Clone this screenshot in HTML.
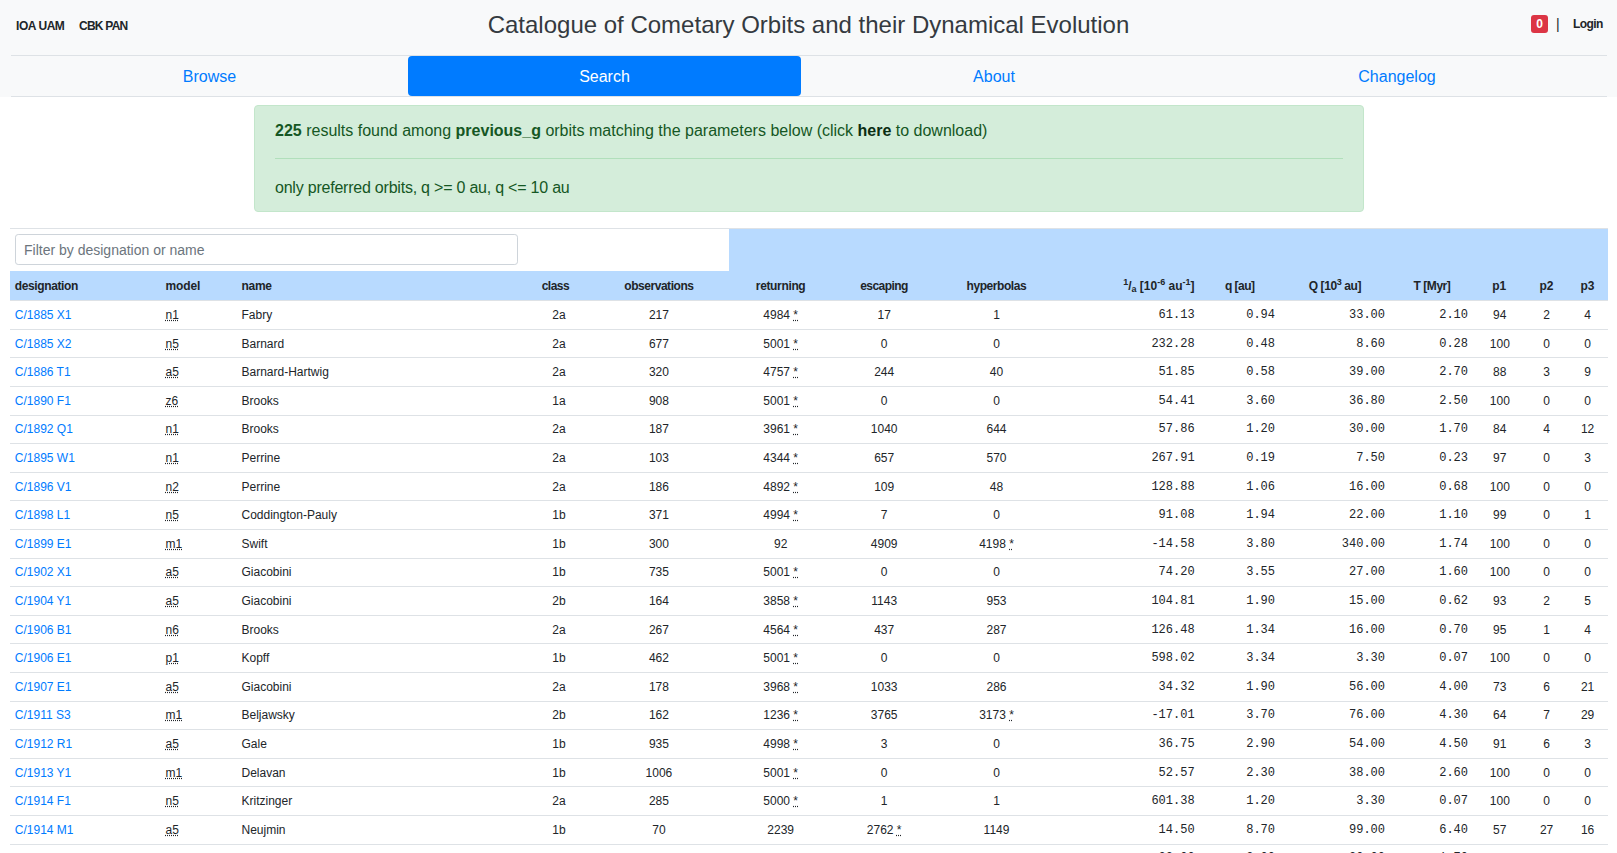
<!DOCTYPE html>
<html><head><meta charset="utf-8"><title>Catalogue of Cometary Orbits and their Dynamical Evolution</title>
<style>
html,body{margin:0;padding:0;}
body{width:1617px;height:853px;overflow:hidden;position:relative;background:#fff;font-family:"Liberation Sans",sans-serif;color:#212529;}
.abs{position:absolute;white-space:nowrap;}
#topbar{position:absolute;left:0;top:0;width:1617px;height:97px;background:#f8f9fa;}
.brand{position:absolute;font-weight:bold;font-size:12px;line-height:18px;color:#212529;white-space:nowrap;}
#title{position:absolute;left:0;width:1617px;text-align:center;font-size:24px;line-height:29px;top:10px;color:#343a40;white-space:nowrap;}
#badge{position:absolute;left:1531px;top:15px;width:17px;height:18px;background:#dc3545;border-radius:3px;color:#fff;font-weight:bold;font-size:12px;line-height:18px;text-align:center;}
.navline{position:absolute;left:11px;width:1596px;height:1px;background:#dee2e6;}
.nav{position:absolute;top:56px;height:40px;line-height:42px;text-align:center;font-size:16px;color:#007bff;white-space:nowrap;}
#search{background:#007bff;color:#fff;border-radius:4px;}
#alert{position:absolute;left:254px;top:105px;width:1108px;height:105px;background:#d4edda;border:1px solid #c3e6cb;border-radius:4px;color:#155724;font-size:16px;}
#alert .t{position:absolute;left:20px;white-space:nowrap;line-height:24px;}
#alert .hr{position:absolute;left:20px;right:20px;top:52px;height:1px;background:#b1dfbb;}
#tbl{position:absolute;left:10px;top:228px;width:1598px;}
.row{position:absolute;left:10px;width:1598px;height:28.6px;border-top:1px solid #dee2e6;box-sizing:border-box;}
.row span,.hrow span{position:absolute;top:4.8px;line-height:18px;font-size:12px;white-space:nowrap;}
span.c{text-align:center;}
span.r{text-align:right;}
span.m{font-family:"Liberation Mono",monospace;}
a{color:#007bff;text-decoration:none;}
abbr{text-decoration:underline dotted;}
.hrow span{font-weight:bold;}
sup,sub{font-size:75%;line-height:0;position:relative;vertical-align:baseline;}
sup{top:-.5em;} sub{bottom:-.25em;}
#filter{position:absolute;left:15px;top:234px;width:501px;height:29px;border:1px solid #ced4da;border-radius:3.2px;background:#fff;}
#filter span{position:absolute;left:8px;top:1px;line-height:29px;font-size:14px;color:#6c757d;white-space:nowrap;}
</style></head><body>
<div id="topbar"></div>
<div class="brand" style="left:16px;top:17px;letter-spacing:-0.45px">IOA UAM</div>
<div class="brand" style="left:79px;top:17px;letter-spacing:-0.75px">CBK PAN</div>
<div id="title">Catalogue of Cometary Orbits and their Dynamical Evolution</div>
<div id="badge">0</div>
<div class="brand" style="left:1556px;top:15px;font-weight:normal;font-size:14px">|</div>
<div class="brand" style="left:1573px;top:15px;letter-spacing:-0.55px">Login</div>
<div class="navline" style="top:55px"></div>
<div class="navline" style="top:96px"></div>
<div class="nav" style="left:11px;width:397px">Browse</div>
<div class="nav" id="search" style="left:408px;width:393px">Search</div>
<div class="nav" style="left:801px;width:386px">About</div>
<div class="nav" style="left:1187px;width:420px">Changelog</div>
<div id="alert">
<div class="t" style="top:13px"><b>225</b> results found among <b>previous_g</b> orbits matching the parameters below (click <b style="color:#0b2e13">here</b> to download)</div>
<div class="hr"></div>
<div class="t" style="top:70px;letter-spacing:-0.22px">only preferred orbits, q &gt;= 0 au, q &lt;= 10 au</div>
</div>
<div style="position:absolute;left:10px;top:228px;width:1598px;height:1px;background:#dee2e6"></div>
<div style="position:absolute;left:729px;top:229px;width:879px;height:42px;background:#b8daff"></div>
<div style="position:absolute;left:10px;top:271px;width:1598px;height:29px;background:#b8daff"></div>
<div id="filter"><span>Filter by designation or name</span></div>
<div class="hrow" style="position:absolute;left:10px;top:272px;width:1598px;height:29px"><span class="l" style="letter-spacing:-0.39px;left:4.8px">designation</span><span class="l" style="letter-spacing:-0.1px;left:155.5px">model</span><span class="l" style="letter-spacing:-0.3px;left:231.5px">name</span><span class="c" style="letter-spacing:-0.5px;left:395.4px;width:300px">class</span><span class="c" style="letter-spacing:-0.46px;left:498.9px;width:300px">observations</span><span class="c" style="letter-spacing:-0.35px;left:620.6px;width:300px">returning</span><span class="c" style="letter-spacing:-0.54px;left:724.0px;width:300px">escaping</span><span class="c" style="letter-spacing:-0.44px;left:836.4px;width:300px">hyperbolas</span><span class="r" style="left:884.6px;width:300px"><sup>1</sup>/<sub>a</sub> [10<sup>-6</sup> au<sup>-1</sup>]</span><span class="r" style="letter-spacing:-0.5px;left:944.6px;width:300px">q [au]</span><span class="r" style="letter-spacing:-0.4px;left:1051.1px;width:300px">Q [10<sup>3</sup> au]</span><span class="r" style="letter-spacing:-0.45px;left:1140.4px;width:300px">T [Myr]</span><span class="c" style="left:1339.3px;width:300px">p1</span><span class="c" style="left:1386.5px;width:300px">p2</span><span class="c" style="left:1427.5px;width:300px">p3</span></div>
<div id="body" style="position:absolute;left:0;top:0;width:1617px">
<div class="row" style="top:300.20px"><span class="l" style="left:4.8px"><a>C/1885 X1</a></span><span class="l" style="left:155.5px"><abbr>n1</abbr></span><span class="l" style="left:231.5px">Fabry</span><span class="c" style="left:399.0px;width:300px">2a</span><span class="c" style="left:498.9px;width:300px">217</span><span class="c" style="left:620.7px;width:300px">4984 <abbr>*</abbr></span><span class="c" style="left:724.2px;width:300px">17</span><span class="c" style="left:836.5px;width:300px">1</span><span class="r m" style="left:884.6px;width:300px">61.13</span><span class="r m" style="left:965.0px;width:300px">0.94</span><span class="r m" style="left:1075.0px;width:300px">33.00</span><span class="r m" style="left:1158.0px;width:300px">2.10</span><span class="c" style="left:1339.8px;width:300px">94</span><span class="c" style="left:1386.6px;width:300px">2</span><span class="c" style="left:1427.6px;width:300px">4</span></div><div class="row" style="top:328.80px"><span class="l" style="left:4.8px"><a>C/1885 X2</a></span><span class="l" style="left:155.5px"><abbr>n5</abbr></span><span class="l" style="left:231.5px">Barnard</span><span class="c" style="left:399.0px;width:300px">2a</span><span class="c" style="left:498.9px;width:300px">677</span><span class="c" style="left:620.7px;width:300px">5001 <abbr>*</abbr></span><span class="c" style="left:724.2px;width:300px">0</span><span class="c" style="left:836.5px;width:300px">0</span><span class="r m" style="left:884.6px;width:300px">232.28</span><span class="r m" style="left:965.0px;width:300px">0.48</span><span class="r m" style="left:1075.0px;width:300px">8.60</span><span class="r m" style="left:1158.0px;width:300px">0.28</span><span class="c" style="left:1339.8px;width:300px">100</span><span class="c" style="left:1386.6px;width:300px">0</span><span class="c" style="left:1427.6px;width:300px">0</span></div><div class="row" style="top:357.40px"><span class="l" style="left:4.8px"><a>C/1886 T1</a></span><span class="l" style="left:155.5px"><abbr>a5</abbr></span><span class="l" style="left:231.5px">Barnard-Hartwig</span><span class="c" style="left:399.0px;width:300px">2a</span><span class="c" style="left:498.9px;width:300px">320</span><span class="c" style="left:620.7px;width:300px">4757 <abbr>*</abbr></span><span class="c" style="left:724.2px;width:300px">244</span><span class="c" style="left:836.5px;width:300px">40</span><span class="r m" style="left:884.6px;width:300px">51.85</span><span class="r m" style="left:965.0px;width:300px">0.58</span><span class="r m" style="left:1075.0px;width:300px">39.00</span><span class="r m" style="left:1158.0px;width:300px">2.70</span><span class="c" style="left:1339.8px;width:300px">88</span><span class="c" style="left:1386.6px;width:300px">3</span><span class="c" style="left:1427.6px;width:300px">9</span></div><div class="row" style="top:386.00px"><span class="l" style="left:4.8px"><a>C/1890 F1</a></span><span class="l" style="left:155.5px"><abbr>z6</abbr></span><span class="l" style="left:231.5px">Brooks</span><span class="c" style="left:399.0px;width:300px">1a</span><span class="c" style="left:498.9px;width:300px">908</span><span class="c" style="left:620.7px;width:300px">5001 <abbr>*</abbr></span><span class="c" style="left:724.2px;width:300px">0</span><span class="c" style="left:836.5px;width:300px">0</span><span class="r m" style="left:884.6px;width:300px">54.41</span><span class="r m" style="left:965.0px;width:300px">3.60</span><span class="r m" style="left:1075.0px;width:300px">36.80</span><span class="r m" style="left:1158.0px;width:300px">2.50</span><span class="c" style="left:1339.8px;width:300px">100</span><span class="c" style="left:1386.6px;width:300px">0</span><span class="c" style="left:1427.6px;width:300px">0</span></div><div class="row" style="top:414.60px"><span class="l" style="left:4.8px"><a>C/1892 Q1</a></span><span class="l" style="left:155.5px"><abbr>n1</abbr></span><span class="l" style="left:231.5px">Brooks</span><span class="c" style="left:399.0px;width:300px">2a</span><span class="c" style="left:498.9px;width:300px">187</span><span class="c" style="left:620.7px;width:300px">3961 <abbr>*</abbr></span><span class="c" style="left:724.2px;width:300px">1040</span><span class="c" style="left:836.5px;width:300px">644</span><span class="r m" style="left:884.6px;width:300px">57.86</span><span class="r m" style="left:965.0px;width:300px">1.20</span><span class="r m" style="left:1075.0px;width:300px">30.00</span><span class="r m" style="left:1158.0px;width:300px">1.70</span><span class="c" style="left:1339.8px;width:300px">84</span><span class="c" style="left:1386.6px;width:300px">4</span><span class="c" style="left:1427.6px;width:300px">12</span></div><div class="row" style="top:443.20px"><span class="l" style="left:4.8px"><a>C/1895 W1</a></span><span class="l" style="left:155.5px"><abbr>n1</abbr></span><span class="l" style="left:231.5px">Perrine</span><span class="c" style="left:399.0px;width:300px">2a</span><span class="c" style="left:498.9px;width:300px">103</span><span class="c" style="left:620.7px;width:300px">4344 <abbr>*</abbr></span><span class="c" style="left:724.2px;width:300px">657</span><span class="c" style="left:836.5px;width:300px">570</span><span class="r m" style="left:884.6px;width:300px">267.91</span><span class="r m" style="left:965.0px;width:300px">0.19</span><span class="r m" style="left:1075.0px;width:300px">7.50</span><span class="r m" style="left:1158.0px;width:300px">0.23</span><span class="c" style="left:1339.8px;width:300px">97</span><span class="c" style="left:1386.6px;width:300px">0</span><span class="c" style="left:1427.6px;width:300px">3</span></div><div class="row" style="top:471.80px"><span class="l" style="left:4.8px"><a>C/1896 V1</a></span><span class="l" style="left:155.5px"><abbr>n2</abbr></span><span class="l" style="left:231.5px">Perrine</span><span class="c" style="left:399.0px;width:300px">2a</span><span class="c" style="left:498.9px;width:300px">186</span><span class="c" style="left:620.7px;width:300px">4892 <abbr>*</abbr></span><span class="c" style="left:724.2px;width:300px">109</span><span class="c" style="left:836.5px;width:300px">48</span><span class="r m" style="left:884.6px;width:300px">128.88</span><span class="r m" style="left:965.0px;width:300px">1.06</span><span class="r m" style="left:1075.0px;width:300px">16.00</span><span class="r m" style="left:1158.0px;width:300px">0.68</span><span class="c" style="left:1339.8px;width:300px">100</span><span class="c" style="left:1386.6px;width:300px">0</span><span class="c" style="left:1427.6px;width:300px">0</span></div><div class="row" style="top:500.40px"><span class="l" style="left:4.8px"><a>C/1898 L1</a></span><span class="l" style="left:155.5px"><abbr>n5</abbr></span><span class="l" style="left:231.5px">Coddington-Pauly</span><span class="c" style="left:399.0px;width:300px">1b</span><span class="c" style="left:498.9px;width:300px">371</span><span class="c" style="left:620.7px;width:300px">4994 <abbr>*</abbr></span><span class="c" style="left:724.2px;width:300px">7</span><span class="c" style="left:836.5px;width:300px">0</span><span class="r m" style="left:884.6px;width:300px">91.08</span><span class="r m" style="left:965.0px;width:300px">1.94</span><span class="r m" style="left:1075.0px;width:300px">22.00</span><span class="r m" style="left:1158.0px;width:300px">1.10</span><span class="c" style="left:1339.8px;width:300px">99</span><span class="c" style="left:1386.6px;width:300px">0</span><span class="c" style="left:1427.6px;width:300px">1</span></div><div class="row" style="top:529.00px"><span class="l" style="left:4.8px"><a>C/1899 E1</a></span><span class="l" style="left:155.5px"><abbr>m1</abbr></span><span class="l" style="left:231.5px">Swift</span><span class="c" style="left:399.0px;width:300px">1b</span><span class="c" style="left:498.9px;width:300px">300</span><span class="c" style="left:620.7px;width:300px">92</span><span class="c" style="left:724.2px;width:300px">4909</span><span class="c" style="left:836.5px;width:300px">4198 <abbr>*</abbr></span><span class="r m" style="left:884.6px;width:300px">-14.58</span><span class="r m" style="left:965.0px;width:300px">3.80</span><span class="r m" style="left:1075.0px;width:300px">340.00</span><span class="r m" style="left:1158.0px;width:300px">1.74</span><span class="c" style="left:1339.8px;width:300px">100</span><span class="c" style="left:1386.6px;width:300px">0</span><span class="c" style="left:1427.6px;width:300px">0</span></div><div class="row" style="top:557.60px"><span class="l" style="left:4.8px"><a>C/1902 X1</a></span><span class="l" style="left:155.5px"><abbr>a5</abbr></span><span class="l" style="left:231.5px">Giacobini</span><span class="c" style="left:399.0px;width:300px">1b</span><span class="c" style="left:498.9px;width:300px">735</span><span class="c" style="left:620.7px;width:300px">5001 <abbr>*</abbr></span><span class="c" style="left:724.2px;width:300px">0</span><span class="c" style="left:836.5px;width:300px">0</span><span class="r m" style="left:884.6px;width:300px">74.20</span><span class="r m" style="left:965.0px;width:300px">3.55</span><span class="r m" style="left:1075.0px;width:300px">27.00</span><span class="r m" style="left:1158.0px;width:300px">1.60</span><span class="c" style="left:1339.8px;width:300px">100</span><span class="c" style="left:1386.6px;width:300px">0</span><span class="c" style="left:1427.6px;width:300px">0</span></div><div class="row" style="top:586.20px"><span class="l" style="left:4.8px"><a>C/1904 Y1</a></span><span class="l" style="left:155.5px"><abbr>a5</abbr></span><span class="l" style="left:231.5px">Giacobini</span><span class="c" style="left:399.0px;width:300px">2b</span><span class="c" style="left:498.9px;width:300px">164</span><span class="c" style="left:620.7px;width:300px">3858 <abbr>*</abbr></span><span class="c" style="left:724.2px;width:300px">1143</span><span class="c" style="left:836.5px;width:300px">953</span><span class="r m" style="left:884.6px;width:300px">104.81</span><span class="r m" style="left:965.0px;width:300px">1.90</span><span class="r m" style="left:1075.0px;width:300px">15.00</span><span class="r m" style="left:1158.0px;width:300px">0.62</span><span class="c" style="left:1339.8px;width:300px">93</span><span class="c" style="left:1386.6px;width:300px">2</span><span class="c" style="left:1427.6px;width:300px">5</span></div><div class="row" style="top:614.80px"><span class="l" style="left:4.8px"><a>C/1906 B1</a></span><span class="l" style="left:155.5px"><abbr>n6</abbr></span><span class="l" style="left:231.5px">Brooks</span><span class="c" style="left:399.0px;width:300px">2a</span><span class="c" style="left:498.9px;width:300px">267</span><span class="c" style="left:620.7px;width:300px">4564 <abbr>*</abbr></span><span class="c" style="left:724.2px;width:300px">437</span><span class="c" style="left:836.5px;width:300px">287</span><span class="r m" style="left:884.6px;width:300px">126.48</span><span class="r m" style="left:965.0px;width:300px">1.34</span><span class="r m" style="left:1075.0px;width:300px">16.00</span><span class="r m" style="left:1158.0px;width:300px">0.70</span><span class="c" style="left:1339.8px;width:300px">95</span><span class="c" style="left:1386.6px;width:300px">1</span><span class="c" style="left:1427.6px;width:300px">4</span></div><div class="row" style="top:643.40px"><span class="l" style="left:4.8px"><a>C/1906 E1</a></span><span class="l" style="left:155.5px"><abbr>p1</abbr></span><span class="l" style="left:231.5px">Kopff</span><span class="c" style="left:399.0px;width:300px">1b</span><span class="c" style="left:498.9px;width:300px">462</span><span class="c" style="left:620.7px;width:300px">5001 <abbr>*</abbr></span><span class="c" style="left:724.2px;width:300px">0</span><span class="c" style="left:836.5px;width:300px">0</span><span class="r m" style="left:884.6px;width:300px">598.02</span><span class="r m" style="left:965.0px;width:300px">3.34</span><span class="r m" style="left:1075.0px;width:300px">3.30</span><span class="r m" style="left:1158.0px;width:300px">0.07</span><span class="c" style="left:1339.8px;width:300px">100</span><span class="c" style="left:1386.6px;width:300px">0</span><span class="c" style="left:1427.6px;width:300px">0</span></div><div class="row" style="top:672.00px"><span class="l" style="left:4.8px"><a>C/1907 E1</a></span><span class="l" style="left:155.5px"><abbr>a5</abbr></span><span class="l" style="left:231.5px">Giacobini</span><span class="c" style="left:399.0px;width:300px">2a</span><span class="c" style="left:498.9px;width:300px">178</span><span class="c" style="left:620.7px;width:300px">3968 <abbr>*</abbr></span><span class="c" style="left:724.2px;width:300px">1033</span><span class="c" style="left:836.5px;width:300px">286</span><span class="r m" style="left:884.6px;width:300px">34.32</span><span class="r m" style="left:965.0px;width:300px">1.90</span><span class="r m" style="left:1075.0px;width:300px">56.00</span><span class="r m" style="left:1158.0px;width:300px">4.00</span><span class="c" style="left:1339.8px;width:300px">73</span><span class="c" style="left:1386.6px;width:300px">6</span><span class="c" style="left:1427.6px;width:300px">21</span></div><div class="row" style="top:700.60px"><span class="l" style="left:4.8px"><a>C/1911 S3</a></span><span class="l" style="left:155.5px"><abbr>m1</abbr></span><span class="l" style="left:231.5px">Beljawsky</span><span class="c" style="left:399.0px;width:300px">2b</span><span class="c" style="left:498.9px;width:300px">162</span><span class="c" style="left:620.7px;width:300px">1236 <abbr>*</abbr></span><span class="c" style="left:724.2px;width:300px">3765</span><span class="c" style="left:836.5px;width:300px">3173 <abbr>*</abbr></span><span class="r m" style="left:884.6px;width:300px">-17.01</span><span class="r m" style="left:965.0px;width:300px">3.70</span><span class="r m" style="left:1075.0px;width:300px">76.00</span><span class="r m" style="left:1158.0px;width:300px">4.30</span><span class="c" style="left:1339.8px;width:300px">64</span><span class="c" style="left:1386.6px;width:300px">7</span><span class="c" style="left:1427.6px;width:300px">29</span></div><div class="row" style="top:729.20px"><span class="l" style="left:4.8px"><a>C/1912 R1</a></span><span class="l" style="left:155.5px"><abbr>a5</abbr></span><span class="l" style="left:231.5px">Gale</span><span class="c" style="left:399.0px;width:300px">1b</span><span class="c" style="left:498.9px;width:300px">935</span><span class="c" style="left:620.7px;width:300px">4998 <abbr>*</abbr></span><span class="c" style="left:724.2px;width:300px">3</span><span class="c" style="left:836.5px;width:300px">0</span><span class="r m" style="left:884.6px;width:300px">36.75</span><span class="r m" style="left:965.0px;width:300px">2.90</span><span class="r m" style="left:1075.0px;width:300px">54.00</span><span class="r m" style="left:1158.0px;width:300px">4.50</span><span class="c" style="left:1339.8px;width:300px">91</span><span class="c" style="left:1386.6px;width:300px">6</span><span class="c" style="left:1427.6px;width:300px">3</span></div><div class="row" style="top:757.80px"><span class="l" style="left:4.8px"><a>C/1913 Y1</a></span><span class="l" style="left:155.5px"><abbr>m1</abbr></span><span class="l" style="left:231.5px">Delavan</span><span class="c" style="left:399.0px;width:300px">1b</span><span class="c" style="left:498.9px;width:300px">1006</span><span class="c" style="left:620.7px;width:300px">5001 <abbr>*</abbr></span><span class="c" style="left:724.2px;width:300px">0</span><span class="c" style="left:836.5px;width:300px">0</span><span class="r m" style="left:884.6px;width:300px">52.57</span><span class="r m" style="left:965.0px;width:300px">2.30</span><span class="r m" style="left:1075.0px;width:300px">38.00</span><span class="r m" style="left:1158.0px;width:300px">2.60</span><span class="c" style="left:1339.8px;width:300px">100</span><span class="c" style="left:1386.6px;width:300px">0</span><span class="c" style="left:1427.6px;width:300px">0</span></div><div class="row" style="top:786.40px"><span class="l" style="left:4.8px"><a>C/1914 F1</a></span><span class="l" style="left:155.5px"><abbr>n5</abbr></span><span class="l" style="left:231.5px">Kritzinger</span><span class="c" style="left:399.0px;width:300px">2a</span><span class="c" style="left:498.9px;width:300px">285</span><span class="c" style="left:620.7px;width:300px">5000 <abbr>*</abbr></span><span class="c" style="left:724.2px;width:300px">1</span><span class="c" style="left:836.5px;width:300px">1</span><span class="r m" style="left:884.6px;width:300px">601.38</span><span class="r m" style="left:965.0px;width:300px">1.20</span><span class="r m" style="left:1075.0px;width:300px">3.30</span><span class="r m" style="left:1158.0px;width:300px">0.07</span><span class="c" style="left:1339.8px;width:300px">100</span><span class="c" style="left:1386.6px;width:300px">0</span><span class="c" style="left:1427.6px;width:300px">0</span></div><div class="row" style="top:815.00px"><span class="l" style="left:4.8px"><a>C/1914 M1</a></span><span class="l" style="left:155.5px"><abbr>a5</abbr></span><span class="l" style="left:231.5px">Neujmin</span><span class="c" style="left:399.0px;width:300px">1b</span><span class="c" style="left:498.9px;width:300px">70</span><span class="c" style="left:620.7px;width:300px">2239</span><span class="c" style="left:724.2px;width:300px">2762 <abbr>*</abbr></span><span class="c" style="left:836.5px;width:300px">1149</span><span class="r m" style="left:884.6px;width:300px">14.50</span><span class="r m" style="left:965.0px;width:300px">8.70</span><span class="r m" style="left:1075.0px;width:300px">99.00</span><span class="r m" style="left:1158.0px;width:300px">6.40</span><span class="c" style="left:1339.8px;width:300px">57</span><span class="c" style="left:1386.6px;width:300px">27</span><span class="c" style="left:1427.6px;width:300px">16</span></div><div class="row" style="top:843.60px"><span class="l" style="left:4.8px"><a>C/1915 C1</a></span><span class="l" style="left:155.5px"><abbr>a5</abbr></span><span class="l" style="left:231.5px">Mellish</span><span class="c" style="left:399.0px;width:300px">1b</span><span class="c" style="left:498.9px;width:300px">420</span><span class="c" style="left:620.7px;width:300px">4412 <abbr>*</abbr></span><span class="c" style="left:724.2px;width:300px">588</span><span class="c" style="left:836.5px;width:300px">310</span><span class="r m" style="left:884.6px;width:300px">23.00</span><span class="r m" style="left:965.0px;width:300px">3.00</span><span class="r m" style="left:1075.0px;width:300px">30.00</span><span class="r m" style="left:1158.0px;width:300px">1.70</span><span class="c" style="left:1339.8px;width:300px">100</span><span class="c" style="left:1386.6px;width:300px">0</span><span class="c" style="left:1427.6px;width:300px">0</span></div>
</div>
</body></html>
